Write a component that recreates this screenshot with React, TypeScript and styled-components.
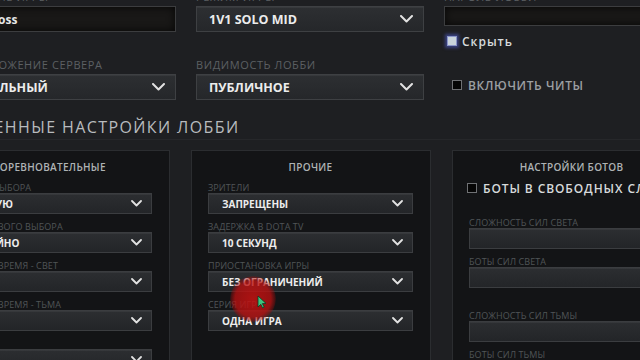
import React from 'react';
import styled, { createGlobalStyle } from 'styled-components';

const Global = createGlobalStyle`
  html, body { margin: 0; padding: 0; background: #1e1f22; }
  body { width: 640px; height: 360px; overflow: hidden; font-family: "Open Sans", "Noto Sans", sans-serif; }
  #root { width: 640px; height: 360px; overflow: hidden; }
`;

const Screen = styled.div`
  position: relative;
  width: 640px;
  height: 360px;
  overflow: hidden;
  background: #1e1f22;
`;

const Canvas = styled.div`
  display: flex;
  flex-direction: column;
  width: 800px;
  margin-left: -70px;
  margin-top: -10px;
`;

const TopForm = styled.div`
  display: grid;
  grid-template-columns: 226px 228px 300px;
  grid-template-rows: 58px 42px;
  column-gap: 20px;
  row-gap: 10px;
  margin-left: 20px;
`;

const Cell = styled.div`
  display: flex;
  flex-direction: column;
`;

const TopLabel = styled.div`
  height: 14px;
  line-height: 14px;
  margin-bottom: 2px;
  font-size: 11px;
  letter-spacing: 0.6px;
  color: #5c5f63;
  white-space: nowrap;
`;

const TopInput = styled.div`
  height: 26px;
  box-sizing: border-box;
  display: flex;
  align-items: center;
  padding-left: 14px;
  background: #191817;
  border: 1px solid #3c3d3f;
  box-shadow: inset 0 0 8px rgba(0, 0, 0, 0.8);
  color: #e6e6e6;
  font-weight: 700;
  font-size: 12px;
  white-space: nowrap;
`;

const TopSelect = styled.div`
  height: 26px;
  box-sizing: border-box;
  display: flex;
  align-items: center;
  justify-content: space-between;
  padding: 0 10px 0 12px;
  background: linear-gradient(#2d2f32, #25272a);
  border: 1px solid #3e4043;
  box-shadow: inset 0 1px 0 rgba(255, 255, 255, 0.05);
  color: #ececec;
  font-weight: 700;
  font-size: 12.5px;
  white-space: nowrap;
`;

const CheckRow = styled.div<{ $dim?: boolean; $size?: number; $spacing?: number; $indent?: number; $top?: number; $gap?: number }>`
  display: flex;
  align-items: center;
  gap: ${p => p.$gap ?? 6}px;
  height: 14px;
  margin-left: ${p => p.$indent ?? 0}px;
  margin-top: ${p => p.$top ?? 0}px;
  color: ${p => (p.$dim ? '#9c9fa2' : '#d6dadb')};
  font-size: ${p => p.$size ?? 12}px;
  font-weight: 600;
  letter-spacing: ${p => p.$spacing ?? 1}px;
  white-space: nowrap;
`;

const Box = styled.span<{ $on?: boolean }>`
  flex: none;
  width: 10px;
  height: 10px;
  box-sizing: border-box;
  border: 1px solid ${p => (p.$on ? '#8a95c8' : '#6f7174')};
  background: ${p => (p.$on ? '#c9d4dc' : '#050505')};
  box-shadow: ${p => (p.$on ? '0 0 3px 2px rgba(80, 95, 210, 0.55)' : 'none')};
`;

const Heading = styled.div`
  margin-top: 16px;
  margin-left: -12px;
  height: 23px;
  line-height: 22px;
  font-size: 16px;
  letter-spacing: 1.4px;
  color: #b8bbbe;
  white-space: nowrap;
  border-bottom: 1px solid #26272a;
`;

const Panels = styled.div`
  display: grid;
  grid-template-columns: repeat(3, 240px);
  column-gap: 21px;
  margin-top: 10px;
`;

const Panel = styled.div`
  height: 240px;
  box-sizing: border-box;
  padding: 8px 17px 0 16px;
  background: #131416;
  border: 1px solid #2b2d30;
  display: flex;
  flex-direction: column;
`;

const PanelTitle = styled.div`
  text-align: center;
  height: 16px;
  line-height: 16px;
  margin-bottom: 7px;
  font-size: 10px;
  font-weight: 600;
  letter-spacing: 0.3px;
  color: #aeb3b4;
  white-space: nowrap;
`;

const FieldList = styled.div<{ $top?: number }>`
  display: flex;
  flex-direction: column;
  gap: 7px;
  margin-top: ${p => p.$top ?? 0}px;
`;

const Field = styled.div`
  display: flex;
  flex-direction: column;
`;

const Label = styled.div`
  height: 11px;
  line-height: 11px;
  font-size: 9px;
  letter-spacing: 0.1px;
  color: #505457;
  white-space: nowrap;
`;

const Select = styled.div`
  height: 21px;
  box-sizing: border-box;
  display: flex;
  align-items: center;
  justify-content: space-between;
  padding: 0 9px 0 13px;
  background: linear-gradient(#2c2e31, #232528);
  border: 1px solid #3b3d40;
  box-shadow: inset 0 1px 0 rgba(255, 255, 255, 0.05);
  color: #ededed;
  font-weight: 700;
  font-size: 10px;
  white-space: nowrap;
`;

const Wide = styled.div`
  width: 300px;
`;

const Glow = styled.div`
  position: absolute;
  left: 230px;
  top: 276px;
  width: 46px;
  height: 46px;
  border-radius: 50%;
  background: radial-gradient(circle, rgba(200, 18, 18, 0.85) 0%, rgba(185, 16, 16, 0.78) 55%, rgba(160, 10, 10, 0.35) 68%, rgba(150, 10, 10, 0) 72%);
  pointer-events: none;
`;

const Cursor = styled.svg`
  position: absolute;
  left: 257px;
  top: 295px;
  pointer-events: none;
`;

const Chevron = () => (
  <svg width="11" height="7" viewBox="0 0 11 7">
    <polyline points="1,1 5.5,5.5 10,1" fill="none" stroke="#e2e2e2" strokeWidth="1.8" strokeLinecap="round" strokeLinejoin="round" />
  </svg>
);

const BigChevron = () => (
  <svg width="13" height="8" viewBox="0 0 13 8">
    <polyline points="1,1 6.5,6.5 12,1" fill="none" stroke="#e2e2e2" strokeWidth="2" strokeLinecap="round" strokeLinejoin="round" />
  </svg>
);

type Opt = { label: string; value: string };

const SelectField = ({ label, value }: Opt) => (
  <Field>
    <Label>{label}</Label>
    <Select>
      <span>{value}</span>
      <Chevron />
    </Select>
  </Field>
);

const EmptyField = ({ label }: { label: string }) => (
  <Field>
    <Label>{label}</Label>
    <Wide>
      <Select />
    </Wide>
  </Field>
);

const competitive: Opt[] = [
  { label: 'ПОРЯДОК ВЫБОРА', value: 'ВРУЧНУЮ' },
  { label: 'ПРАВО ПЕРВОГО ВЫБОРА', value: 'СЛУЧАЙНО' },
  { label: 'ЗАПАСНОЕ ВРЕМЯ - СВЕТ', value: 'НЕТ' },
  { label: 'ЗАПАСНОЕ ВРЕМЯ - ТЬМА', value: 'НЕТ' },
  { label: 'ТАЙМЕР', value: 'НЕТ' },
];

const misc: Opt[] = [
  { label: 'ЗРИТЕЛИ', value: 'ЗАПРЕЩЕНЫ' },
  { label: 'ЗАДЕРЖКА В DOTA TV', value: '10 СЕКУНД' },
  { label: 'ПРИОСТАНОВКА ИГРЫ', value: 'БЕЗ ОГРАНИЧЕНИЙ' },
  { label: 'СЕРИЯ ИГР', value: 'ОДНА ИГРА' },
];

export default function App() {
  return (
    <Screen>
      <Global />
      <Canvas>
        <TopForm>
          <Cell>
            <TopLabel>НАЗВАНИЕ ИГРЫ</TopLabel>
            <TopInput>The Boss</TopInput>
          </Cell>
          <Cell>
            <TopLabel>РЕЖИМ ИГРЫ</TopLabel>
            <TopSelect>
              <span>1V1 SOLO MID</span>
              <BigChevron />
            </TopSelect>
          </Cell>
          <Cell>
            <TopLabel>ПАРОЛЬ ЛОББИ</TopLabel>
            <TopInput />
            <CheckRow $indent={3} $top={8} $gap={5}>
              <Box $on />
              Скрыть
            </CheckRow>
          </Cell>
          <Cell>
            <TopLabel>РАСПОЛОЖЕНИЕ СЕРВЕРА</TopLabel>
            <TopSelect>
              <span>ЛОКАЛЬНЫЙ</span>
              <BigChevron />
            </TopSelect>
          </Cell>
          <Cell>
            <TopLabel>ВИДИМОСТЬ ЛОББИ</TopLabel>
            <TopSelect>
              <span>ПУБЛИЧНОЕ</span>
              <BigChevron />
            </TopSelect>
          </Cell>
          <Cell>
            <CheckRow $dim $indent={8} $top={20} $spacing={0.6}>
              <Box />
              ВКЛЮЧИТЬ ЧИТЫ
            </CheckRow>
          </Cell>
        </TopForm>

        <Heading>РАСШИРЕННЫЕ НАСТРОЙКИ ЛОББИ</Heading>

        <Panels>
          <Panel>
            <PanelTitle>СОРЕВНОВАТЕЛЬНЫЕ</PanelTitle>
            <FieldList>
              {competitive.map(o => (
                <SelectField key={o.label} {...o} />
              ))}
            </FieldList>
          </Panel>
          <Panel>
            <PanelTitle>ПРОЧИЕ</PanelTitle>
            <FieldList>
              {misc.map(o => (
                <SelectField key={o.label} {...o} />
              ))}
            </FieldList>
          </Panel>
          <Panel>
            <PanelTitle>НАСТРОЙКИ БОТОВ</PanelTitle>
            <CheckRow $indent={-2} $top={-1} $size={12} $spacing={0.9}>
              <Box />
              БОТЫ В СВОБОДНЫХ СЛОТАХ
            </CheckRow>
            <FieldList $top={22}>
              <EmptyField label="СЛОЖНОСТЬ СИЛ СВЕТА" />
              <EmptyField label="БОТЫ СИЛ СВЕТА" />
            </FieldList>
            <FieldList $top={22}>
              <EmptyField label="СЛОЖНОСТЬ СИЛ ТЬМЫ" />
              <EmptyField label="БОТЫ СИЛ ТЬМЫ" />
            </FieldList>
          </Panel>
        </Panels>
      </Canvas>
      <Glow />
      <Cursor width="10" height="14" viewBox="0 0 10 14">
        <path d="M1 1 L1 12 L3.8 9.3 L5.6 13 L7.2 12.2 L5.4 8.6 L9 8.4 Z" fill="#3cc47d" stroke="#0c3a22" strokeWidth="0.8" strokeLinejoin="round" />
      </Cursor>
    </Screen>
  );
}
